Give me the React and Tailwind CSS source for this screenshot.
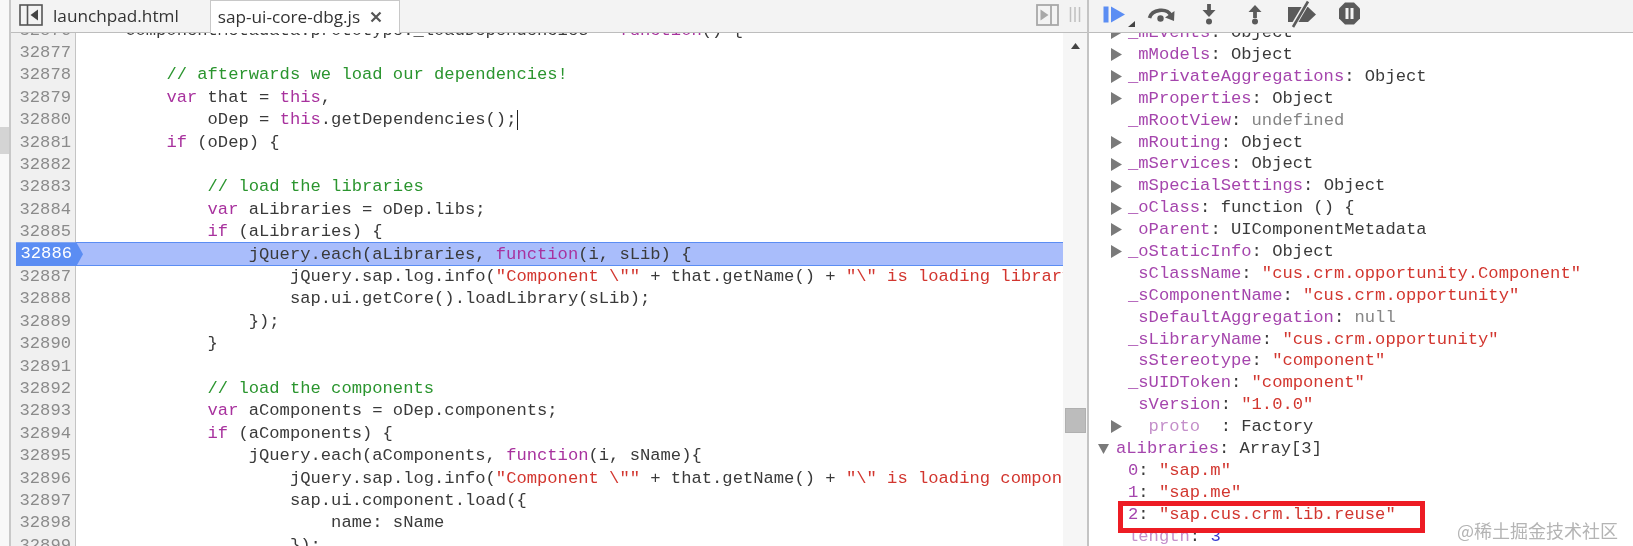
const K = "text-[#a8329e]";
const C = "text-[#2b952f]";
const S = "text-[#d2362f]";
const D = "text-[#3a3a3a]";

const CODE = [
  [32876, 4, [["ComponentMetadata.prototype._loadDependencies = ", D], ["function", K], ["() {", D]]],
  [32877, 0, []],
  [32878, 8, [["// afterwards we load our dependencies!", C]]],
  [32879, 8, [["var", K], [" that = ", D], ["this", K], [",", D]]],
  [32880, 12, [["oDep = ", D], ["this", K], [".getDependencies();", D]], true],
  [32881, 8, [["if", K], [" (oDep) {", D]]],
  [32882, 0, []],
  [32883, 12, [["// load the libraries", C]]],
  [32884, 12, [["var", K], [" aLibraries = oDep.libs;", D]]],
  [32885, 12, [["if", K], [" (aLibraries) {", D]]],
  [32886, 16, [["jQuery.each(aLibraries, ", D], ["function", K], ["(i, sLib) {", D]]],
  [32887, 20, [["jQuery.sap.log.info(", D], ['"Component \\""', S], [" + that.getName() + ", D], ['"\\" is loading library', S]]],
  [32888, 20, [["sap.ui.getCore().loadLibrary(sLib);", D]]],
  [32889, 16, [["});", D]]],
  [32890, 12, [["}", D]]],
  [32891, 0, []],
  [32892, 12, [["// load the components", C]]],
  [32893, 12, [["var", K], [" aComponents = oDep.components;", D]]],
  [32894, 12, [["if", K], [" (aComponents) {", D]]],
  [32895, 16, [["jQuery.each(aComponents, ", D], ["function", K], ["(i, sName){", D]]],
  [32896, 20, [["jQuery.sap.log.info(", D], ['"Component \\""', S], [" + that.getName() + ", D], ['"\\" is loading component', S]]],
  [32897, 20, [["sap.ui.component.load({", D]]],
  [32898, 24, [["name: sName", D]]],
  [32899, 20, [["});", D]]],
];

const P = "text-[#a545ad]";
const V = "text-[#3a3a3a]";
const R = "text-[#d2362f]";
const G = "text-[#858585]";

const PROPS = [
  ["_mEvents", "Object", V, 1],
  [" mModels", "Object", V, 1],
  ["_mPrivateAggregations", "Object", V, 1],
  [" mProperties", "Object", V, 1],
  ["_mRootView", "undefined", G, 0],
  [" mRouting", "Object", V, 1],
  ["_mServices", "Object", V, 1],
  [" mSpecialSettings", "Object", V, 1],
  ["_oClass", "function () {", V, 1],
  [" oParent", "UIComponentMetadata", V, 1],
  ["_oStaticInfo", "Object", V, 1],
  [" sClassName", '"cus.crm.opportunity.Component"', R, 0],
  ["_sComponentName", '"cus.crm.opportunity"', R, 0],
  [" sDefaultAggregation", "null", G, 0],
  ["_sLibraryName", '"cus.crm.opportunity"', R, 0],
  [" sStereotype", '"component"', R, 0],
  ["_sUIDToken", '"component"', R, 0],
  [" sVersion", '"1.0.0"', R, 0],
];

function CodeRow({ n, indent, tokens, caret }) {
  const active = n === 32886;
  return (
    <div className="flex h-[22.42px] items-center">
      <div className="relative flex h-full w-[65px] shrink-0 items-center justify-end border-r border-[#c4c4c4] bg-[#f0f0f0] pr-[4px] text-[#8b8b8b]">
        {active && (
          <div className="absolute left-[5px] top-[-1px] z-10 flex h-[24px] w-[67px] items-center justify-end bg-[#5b8df3] pr-[11px] text-white [clip-path:polygon(0_0,90%_0,100%_50%,90%_100%,0_100%)]">
            {n}
          </div>
        )}
        {!active && n}
      </div>
      <div
        className={
          active
            ? "flex h-[24px] min-w-0 flex-1 items-center overflow-hidden border-y border-[#5b8df3] bg-[#a9bdfb] pl-[8px] whitespace-pre"
            : "flex h-full min-w-0 flex-1 items-center overflow-hidden pl-[8px] whitespace-pre"
        }
      >
        <span>{" ".repeat(indent)}</span>
        {tokens.map(([t, c], i) => (
          <span key={i} className={c}>
            {t}
          </span>
        ))}
        {caret && <span className="ml-[1px] h-[20px] w-[1px] bg-[#222]" />}
      </div>
    </div>
  );
}

function Arrow({ down }) {
  return (
    <svg width="11" height="13" viewBox="0 0 11 13" className="shrink-0">
      {down ? <path d="M0 2h11L5.5 12z" fill="#7a7a7a" /> : <path d="M0 0l11 6.5L0 13z" fill="#7a7a7a" />}
    </svg>
  );
}

function PropRow({ name, value, color, arrow }) {
  return (
    <div className="flex h-[21.9px] items-center pl-[22px] whitespace-pre">
      <div className="w-[17px] shrink-0">{arrow ? <Arrow /> : null}</div>
      <span className={P}>{name}</span>
      <span className={V}>: </span>
      <span className={color}>{value}</span>
    </div>
  );
}

function Tool({ w, children }) {
  return (
    <svg width={w} height="32" viewBox={`0 0 ${w} 32`} className="shrink-0">
      {children}
    </svg>
  );
}

export default function App() {
  return (
    <div className="flex h-[546px] w-[1633px] overflow-hidden bg-white font-['Liberation_Mono',monospace] text-[17.17px] blur-[0.45px]">
      {/* far-left overview strip */}
      <div className="h-full w-[11px] shrink-0 border-r-2 border-[#c8c8c8] bg-[#f8f8f8]">
        <div className="mt-[127px] h-[27px] bg-[#d4d4d4]" />
      </div>

      {/* source pane */}
      <div className="flex h-full w-[1078px] shrink-0 flex-col border-r-2 border-[#c4c4c4]">
        <div className="flex h-[33px] shrink-0 border-b border-[#bdbdbd] bg-[#f3f3f3] font-['Open_Sans',sans-serif] text-[17.2px] text-[#333]">
          <svg width="24" height="22" viewBox="0 0 24 22" className="ml-[8px] mt-[4px] shrink-0">
            <rect x="1" y="1" width="22" height="20" fill="none" stroke="#555" strokeWidth="1.6" />
            <path d="M8.5 1v20" stroke="#555" strokeWidth="1.6" />
            <path d="M19 5.5v11L11.5 11z" fill="#444" />
          </svg>
          <span className="ml-[10px] flex items-center leading-none">launchpad.html</span>
          <div className="ml-[31px] flex h-[33px] w-[190px] items-center border border-b-0 border-[#c8c8c8] bg-white pl-[7px]">
            <span>sap-ui-core-dbg.js</span>
            <svg width="12" height="12" viewBox="0 0 12 12" className="ml-[10px]">
              <path d="M1.5 1.5l9 9M10.5 1.5l-9 9" stroke="#555" strokeWidth="2.2" />
            </svg>
          </div>
          <div className="ml-auto flex items-start">
            <svg width="23" height="22" viewBox="0 0 23 22" className="mt-[4px] shrink-0">
              <rect x="1" y="1" width="21" height="20" fill="none" stroke="#a8a8a8" strokeWidth="1.8" />
              <path d="M15 1v20" stroke="#a8a8a8" strokeWidth="1.8" />
              <path d="M4.5 5.5v11l8-5.5z" fill="#a8a8a8" />
            </svg>
            <svg width="12" height="15" viewBox="0 0 12 15" className="ml-[10px] mr-[6px] mt-[7px] shrink-0">
              <path d="M1.5 0v15M6 0v15M10.500 0v15" stroke="#c0c0c0" strokeWidth="1.5" />
            </svg>
          </div>
        </div>

        <div className="flex min-h-0 flex-1">
          <div className="min-w-0 flex-1 overflow-hidden">
            <div className="-mt-[13.8px]">
              {CODE.map(([n, indent, tokens, caret]) => (
                <CodeRow key={n} n={n} indent={indent} tokens={tokens} caret={caret} />
              ))}
            </div>
          </div>
          <div className="flex w-[24px] shrink-0 flex-col items-center bg-[#f6f6f6]">
            <svg width="9" height="6" viewBox="0 0 9 6" className="mt-[10px]">
              <path d="M4.500 0L9 6H0z" fill="#444" />
            </svg>
            <div className="mt-[359px] h-[25px] w-[21px] border border-[#b0b0b0] bg-[#bcbcbc]" />
          </div>
        </div>
      </div>

      {/* debugger sidebar */}
      <div className="relative flex h-full min-w-0 flex-1 flex-col">
        <div className="flex h-[33px] shrink-0 items-start border-b border-[#bdbdbd] bg-[#f3f3f3] pl-[14px]">
          <Tool w={33}>
            <rect x="0.500" y="6.500" width="5" height="16" fill="#5b8df3" />
            <path d="M8 6.500l14 8L8 22.500z" fill="#5b8df3" />
            <path d="M32 21v6h-7z" fill="#444" />
          </Tool>
          <div className="ml-[11px]">
            <Tool w={28}>
              <path d="M2.500 18C5 9 20 7.500 24 15.500" fill="none" stroke="#5a5a5a" strokeWidth="3.600" />
              <path d="M27.500 11l-0.500 10-9-3.500z" fill="#5a5a5a" />
              <circle cx="13.500" cy="18.500" r="3.200" fill="#5a5a5a" />
            </Tool>
          </div>
          <div className="ml-[27px]">
            <Tool w={14}>
              <path d="M7 4v8" stroke="#5a5a5a" strokeWidth="3.800" />
              <path d="M0.500 10h13l-6.500 7z" fill="#5a5a5a" />
              <circle cx="7" cy="21.500" r="3" fill="#5a5a5a" />
            </Tool>
          </div>
          <div className="ml-[32px]">
            <Tool w={14}>
              <path d="M7 10v8" stroke="#5a5a5a" strokeWidth="3.800" />
              <path d="M0.500 12h13l-6.500-7z" fill="#5a5a5a" />
              <circle cx="7" cy="21.500" r="3" fill="#5a5a5a" />
            </Tool>
          </div>
          <div className="ml-[25px]">
            <Tool w={30}>
              <path d="M1 7h20l8 7.500-8 7.500H1z" fill="#5a5a5a" />
              <path d="M5 28L21 1" stroke="#f3f3f3" strokeWidth="5" />
              <path d="M6 27L21 1.500" stroke="#5a5a5a" strokeWidth="2.600" />
            </Tool>
          </div>
          <div className="ml-[21px]">
            <Tool w={23}>
              <path d="M7 2.500h9l6 6v10l-6 6H7l-6-6v-10z" fill="#5a5a5a" />
              <rect x="7.500" y="8" width="3" height="11" fill="#f3f3f3" />
              <rect x="12.500" y="8" width="3" height="11" fill="#f3f3f3" />
            </Tool>
          </div>
        </div>

        <div className="min-h-0 flex-1 overflow-hidden">
          <div className="-mt-[11px]">
            {PROPS.map(([name, value, color, arrow]) => (
              <PropRow key={name} name={name} value={value} color={color} arrow={arrow} />
            ))}
            <div className="flex h-[21.9px] items-center pl-[22px] whitespace-pre">
              <div className="w-[17px] shrink-0">
                <Arrow />
              </div>
              <span className="text-[#c48fca]">{"  proto  "}</span>
              <span className={V}>: Factory</span>
            </div>
            <div className="flex h-[21.9px] items-center pl-[9px] whitespace-pre">
              <div className="w-[18px] shrink-0">
                <Arrow down />
              </div>
              <span className={P}>aLibraries</span>
              <span className={V}>: Array[3]</span>
            </div>
            <div className="flex h-[21.9px] items-center pl-[39px] whitespace-pre">
              <span className={P}>0</span>
              <span className={V}>: </span>
              <span className={R}>"sap.m"</span>
            </div>
            <div className="flex h-[21.9px] items-center pl-[39px] whitespace-pre">
              <span className={P}>1</span>
              <span className={V}>: </span>
              <span className={R}>"sap.me"</span>
            </div>
            <div className="flex h-[21.9px] items-center pl-[39px] whitespace-pre">
              <span className={P}>2</span>
              <span className={V}>: </span>
              <span className={R}>"sap.cus.crm.lib.reuse"</span>
            </div>
            <div className="flex h-[21.9px] items-center pl-[39px] whitespace-pre">
              <span className="text-[#c48fca]">length</span>
              <span className={V}>: </span>
              <span className="text-[#3a3ad0]">3</span>
            </div>
          </div>
        </div>

        <div className="absolute left-[29px] top-[501px] h-[32px] w-[307px] border-[5px] border-[#ed1c24]" />
        <div className="absolute left-[368px] top-[518px] font-['Noto_Sans_CJK_SC',sans-serif] text-[18px] leading-[24px] whitespace-nowrap text-[#b4b4b4]">
          @稀土掘金技术社区
        </div>
      </div>
    </div>
  );
}
